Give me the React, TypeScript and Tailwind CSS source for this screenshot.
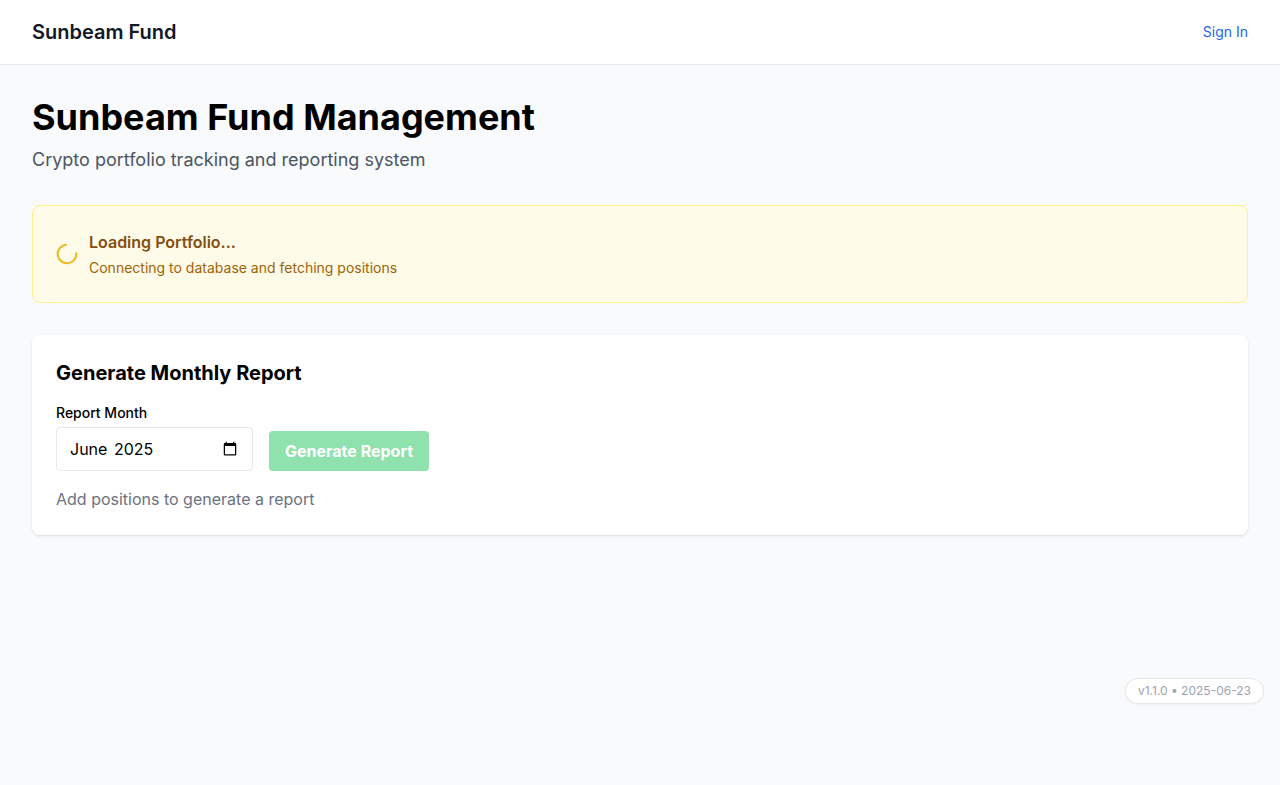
export default function App() {
  return (
    <div className="min-h-screen bg-[#f9fafb] font-['Inter',sans-serif] text-black antialiased">
      <nav className="flex h-[65px] items-center justify-between border-b border-[#e5e7eb] bg-white px-8">
        <span className="text-xl font-semibold text-[#111827]">Sunbeam Fund</span>
        <a href="#" className="text-sm text-[#2563eb]">Sign In</a>
      </nav>
      <main className="p-8">
        <header className="mb-8">
          <h1 className="mb-2 text-4xl font-bold">Sunbeam Fund Management</h1>
          <p className="pt-px text-lg leading-[27px] text-[#4b5563]">Crypto portfolio tracking and reporting system</p>
        </header>
        <section className="mb-8 flex h-[98px] items-center rounded-lg border border-[#fef08a] bg-[#fefce8] px-6">
          <svg className="mr-3 size-5 overflow-visible" viewBox="0 0 20 20" fill="none">
            <path d="M8.9 0.75A9.3 9.3 0 1 0 19.3 9.4" stroke="#edb920" strokeWidth="2.1" strokeLinecap="round" />
          </svg>
          <div>
            <h3 className="font-semibold text-[#854d0e]">Loading Portfolio...</h3>
            <p className="mt-1 text-sm text-[#a16207]">Connecting to database and fetching positions</p>
          </div>
        </section>
        <section className="rounded-lg bg-white p-6 shadow">
          <h2 className="mb-4 text-xl font-bold">Generate Monthly Report</h2>
          <div className="flex items-end gap-4">
            <div>
              <span id="month-label" className="mb-1 block text-sm font-medium">Report Month</span>
              <button aria-labelledby="month-label" className="flex h-11 w-[197px] items-center justify-between rounded border border-[#e5e7eb] bg-white pr-3.5 pl-[13px]">
                <span className="flex gap-[6.5px]">
                  <span>June</span>
                  <span>2025</span>
                </span>
                <svg className="mb-0.5 h-[15px] w-4" viewBox="0 0 24 24" fill="currentColor">
                  <path d="M20 3h-1V1h-2v2H7V1H5v2H4c-1.1 0-2 .9-2 2v16c0 1.1.9 2 2 2h16c1.1 0 2-.9 2-2V5c0-1.1-.9-2-2-2zm0 18H4V8h16v13z" />
                </svg>
              </button>
            </div>
            <button disabled className="h-10 rounded bg-[#22c55e] px-4 font-bold text-white opacity-50">Generate Report</button>
          </div>
          <p className="mt-4 text-[#6b7280]">Add positions to generate a report</p>
        </section>
      </main>
      <div className="absolute top-[678px] right-4 rounded-full border border-[#e5e7eb] bg-white px-3 py-1 text-xs text-[#9ca3af] shadow-xs">v1.1.0 • 2025-06-23</div>
    </div>
  );
}
